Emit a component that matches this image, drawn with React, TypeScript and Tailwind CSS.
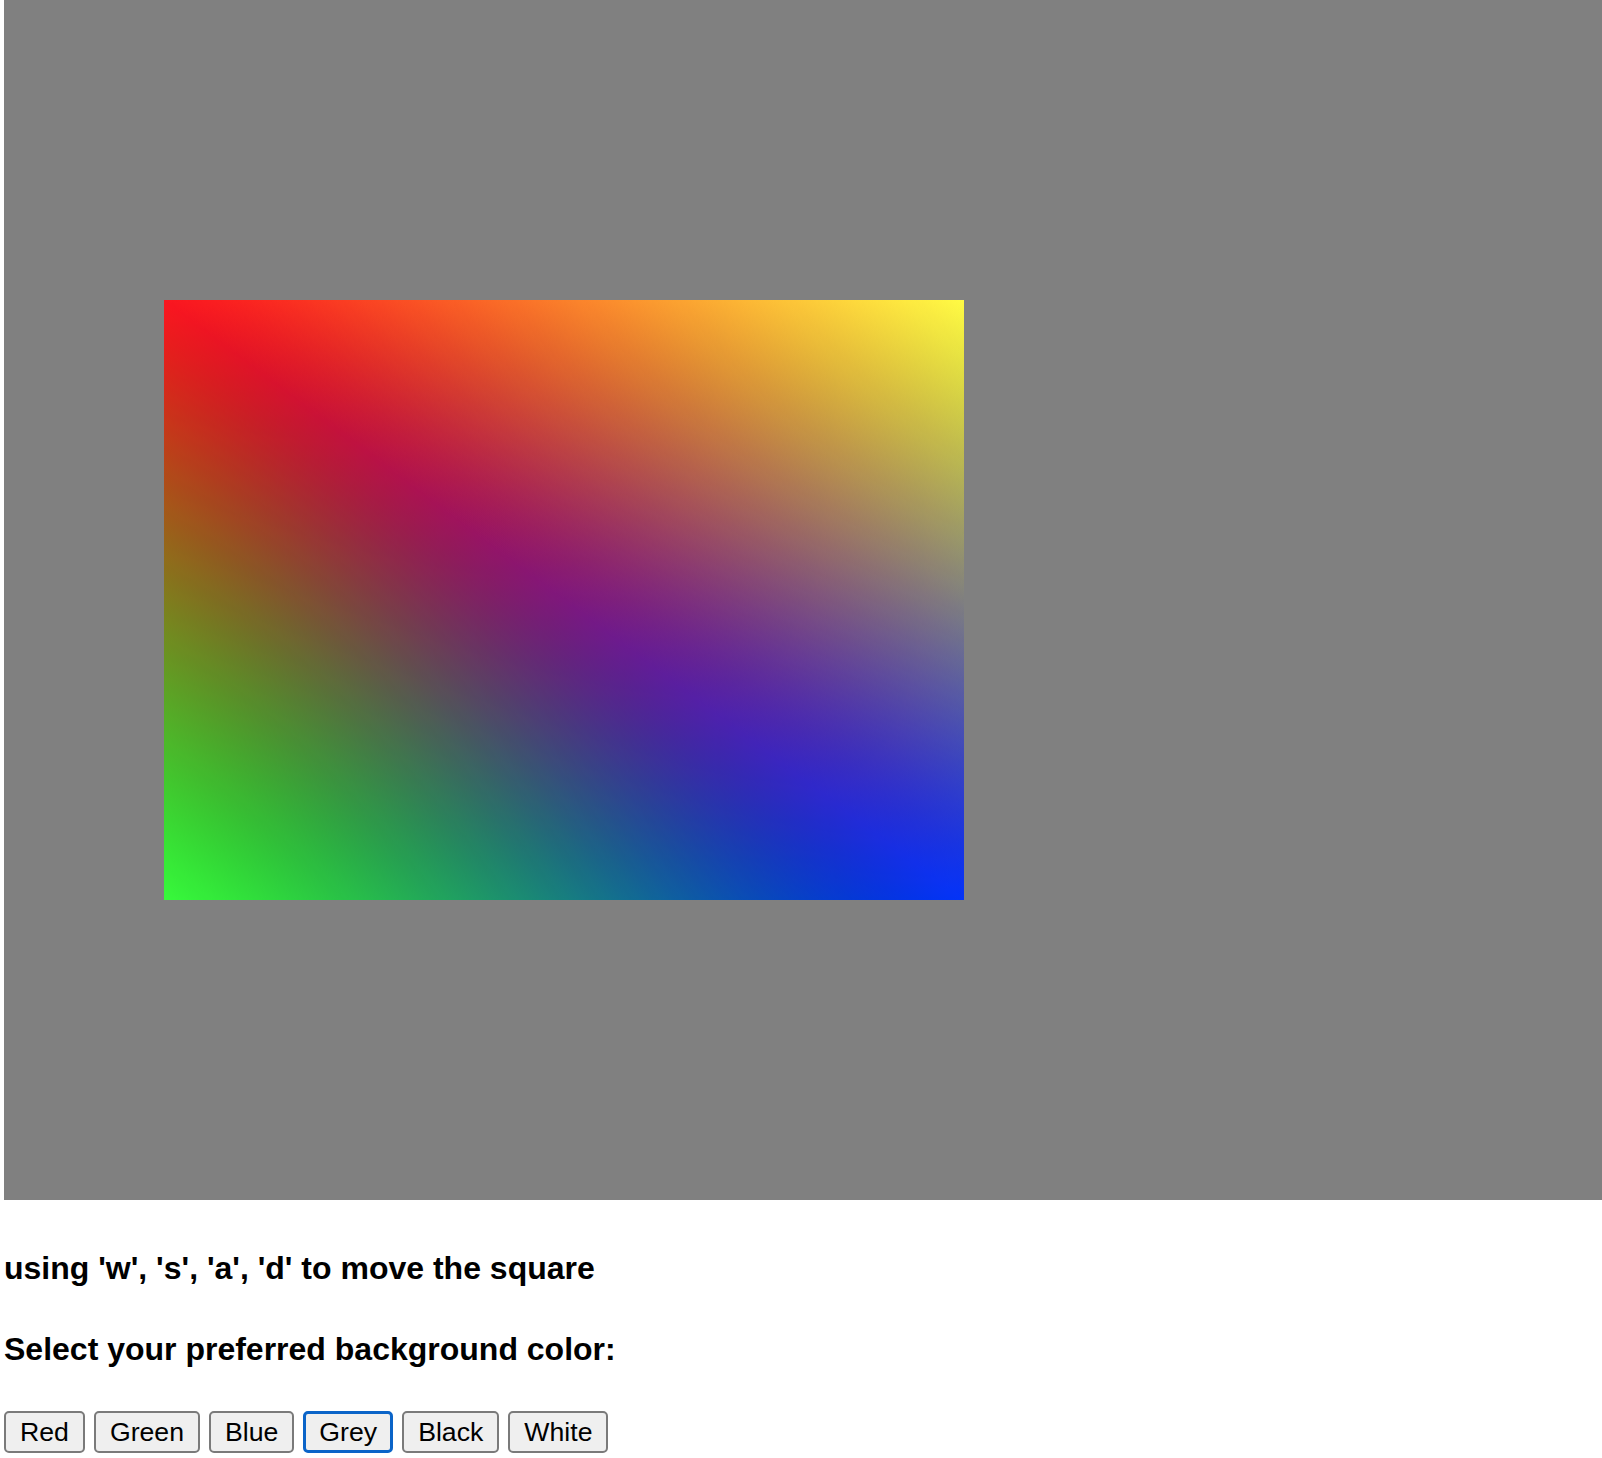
import React from "react";

const labels = ["Red", "Green", "Blue", "Grey", "Black", "White"];

function GradientSquare() {
  return (
    <div className="relative w-[800px] h-[600px] [filter:url(#screen-profile)]">
      {/* lower-left triangle (full square, covered above by upper triangle) */}
      <div className="absolute inset-0 isolate">
        <div className="absolute inset-0 bg-[linear-gradient(to_bottom,#ff0000,#000)]" />
        <div className="absolute inset-0 mix-blend-plus-lighter bg-[linear-gradient(to_bottom_left,#000_50%,#00ff00)]" />
        <div className="absolute inset-0 mix-blend-plus-lighter bg-[linear-gradient(to_right,#000,#0000ff)]" />
      </div>
      {/* upper-right triangle */}
      <div className="absolute inset-0 isolate [clip-path:polygon(0_0,100%_0,100%_100%)]">
        <div className="absolute inset-0 bg-[linear-gradient(to_right,#ff0000,#000)]" />
        <div className="absolute inset-0 mix-blend-plus-lighter bg-[linear-gradient(to_top_right,#000_50%,#ffff00)]" />
        <div className="absolute inset-0 mix-blend-plus-lighter bg-[linear-gradient(to_bottom,#000,#0000ff)]" />
      </div>
    </div>
  );
}

export default function App() {
  return (
    <div className="min-h-[1458px] bg-white text-black font-['Liberation_Sans',Arial,Helvetica,sans-serif]">
      <svg width="0" height="0" className="absolute">
        <defs>
          <filter id="screen-profile" colorInterpolationFilters="linearRGB" x="0" y="0" width="1" height="1">
            <feColorMatrix
              type="matrix"
              values="0.960 0.039 0.001 0 0  0.008 0.958 0.034 0 0  0.014 0.044 0.942 0 0  0 0 0 1 0"
            />
          </filter>
        </defs>
      </svg>
      <div className="ml-[4px] h-[1200px] bg-[#808080] pl-[160px] pt-[300px]">
        <GradientSquare />
      </div>
      <div className="ml-[4px]">
        <h3 className="mt-[50px] text-[32px] leading-[37px] font-bold">
          using 'w', 's', 'a', 'd' to move the square
        </h3>
        <h3 className="mt-[44px] text-[32px] leading-[37px] font-bold">
          Select your preferred background color:
        </h3>
        <div className="mt-[43px] flex gap-[9px]">
          {labels.map((l) =>
            l === "Grey" ? (
              <button
                key={l}
                className="inline-flex h-[42px] items-center rounded-[5px] border-[3px] border-[#0b64c8] bg-[#efefef] px-[13px] text-[26.67px] leading-normal text-black"
              >
                {l}
              </button>
            ) : (
              <button
                key={l}
                className="inline-flex h-[42px] items-center rounded-[5px] border-2 border-[#7a7a7a] bg-[#efefef] px-[14px] text-[26.67px] leading-normal text-black"
              >
                {l}
              </button>
            )
          )}
        </div>
      </div>
    </div>
  );
}
